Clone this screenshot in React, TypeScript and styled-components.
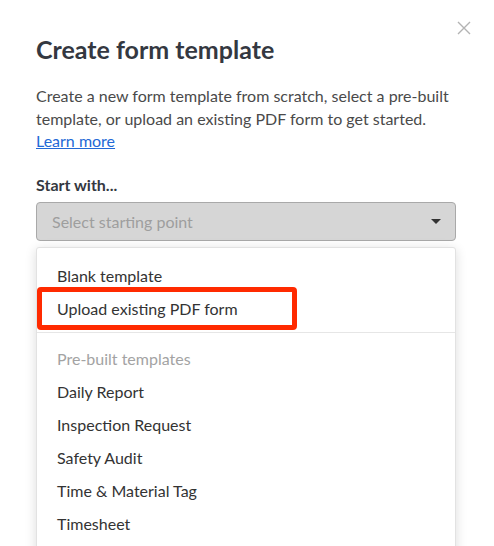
import React from "react";
import styled, { createGlobalStyle } from "styled-components";

const Global = createGlobalStyle`
  html, body { margin: 0; padding: 0; background: #fff; }
  body { font-family: Lato, "Open Sans", Arial, sans-serif; -webkit-font-smoothing: antialiased; }
  #root { height: 546px; overflow: hidden; }
`;

const Modal = styled.div`
  position: relative;
  padding: 33px 38px 0 36px;
  box-sizing: border-box;
  width: 494px;
  height: 546px;
`;

const Close = styled.button`
  position: absolute;
  top: 21px;
  right: 23px;
  width: 14px;
  height: 14px;
  padding: 0;
  border: 0;
  background: none;
  display: flex;
`;

const Title = styled.h1`
  margin: 0;
  font-size: 25px;
  line-height: 32px;
  font-weight: 700;
  color: #343841;
`;

const Intro = styled.p`
  margin: 20px 0 0;
  font-size: 16px;
  line-height: 22.5px;
  color: #4a4a4a;
`;

const Link = styled.a`
  color: #2369d6;
  text-decoration: underline;
`;

const Label = styled.div`
  margin-top: 21px;
  font-size: 16px;
  line-height: 22px;
  font-weight: 700;
  color: #343841;
`;

const SelectWrap = styled.div`
  position: relative;
  margin-top: 6px;
`;

const Select = styled.div`
  height: 39px;
  box-sizing: border-box;
  border: 1px solid #a9a9a9;
  border-radius: 4px;
  background: #d6d6d6;
  display: flex;
  align-items: center;
  justify-content: space-between;
  padding: 0 14px 0 15px;
  font-size: 16px;
  color: #9e9e9e;
`;

const Caret = styled.span`
  width: 0;
  height: 0;
  border-left: 5px solid transparent;
  border-right: 5px solid transparent;
  border-top: 5px solid #333;
`;

const Spacer = styled.div<{ $h: number }>`
  height: ${(p) => p.$h}px;
`;

const Input = styled.div`
  height: 42px;
  box-sizing: border-box;
  border: 1px solid #9a9a9a;
  border-radius: 4px;
`;

const Button = styled.div`
  height: 44px;
  box-sizing: border-box;
  border: 1px solid #7a86c8;
  border-radius: 4px;
  background: #fff;
`;

const Menu = styled.div`
  position: absolute;
  top: 45px;
  left: 0;
  right: 0;
  height: 320px;
  background: #fff;
  border: 1px solid #e2e2e2;
  border-radius: 3px;
  box-shadow: 0 2px 12px rgba(0, 0, 0, 0.14);
  padding-top: 11px;
  z-index: 2;
`;

const Item = styled.div<{ $muted?: boolean }>`
  height: 33px;
  display: flex;
  align-items: center;
  padding-left: 20px;
  font-size: 16px;
  color: ${(p) => (p.$muted ? "#a3a3a3" : "#333")};
`;

const Divider = styled.div`
  height: 1px;
  background: #e6e6e6;
  margin: 7px 0 9px;
`;

const Highlight = styled.div`
  position: absolute;
  left: 0;
  top: 39px;
  width: 260px;
  height: 43px;
  box-sizing: border-box;
  border: 5px solid #ff2a00;
  border-radius: 4px;
  pointer-events: none;
`;

export default function App() {
  return (
    <>
      <Global />
      <Modal>
        <Close aria-label="Close">
          <svg width="14" height="14" viewBox="0 0 14 14">
            <path d="M1 1L13 13M13 1L1 13" stroke="#b3b3b3" strokeWidth="1.4" />
          </svg>
        </Close>
        <Title>Create form template</Title>
        <Intro>
          Create a new form template from scratch, select a pre-built template, or upload an
          existing PDF form to get started.
          <br />
          <Link href="#">Learn more</Link>
        </Intro>
        <Label>Start with...</Label>
        <SelectWrap>
          <Select>
            <span>Select starting point</span>
            <Caret />
          </Select>
          <Menu>
            <Item>Blank template</Item>
            <Item>Upload existing PDF form</Item>
            <Divider />
            <Item $muted>Pre-built templates</Item>
            <Item>Daily Report</Item>
            <Item>Inspection Request</Item>
            <Item>Safety Audit</Item>
            <Item>Time &amp; Material Tag</Item>
            <Item>Timesheet</Item>
            <Highlight />
          </Menu>
        </SelectWrap>
        <Spacer $h={48} />
        <Input />
        <Spacer $h={80} />
        <Input />
        <Spacer $h={36} />
        <Button />
      </Modal>
    </>
  );
}
